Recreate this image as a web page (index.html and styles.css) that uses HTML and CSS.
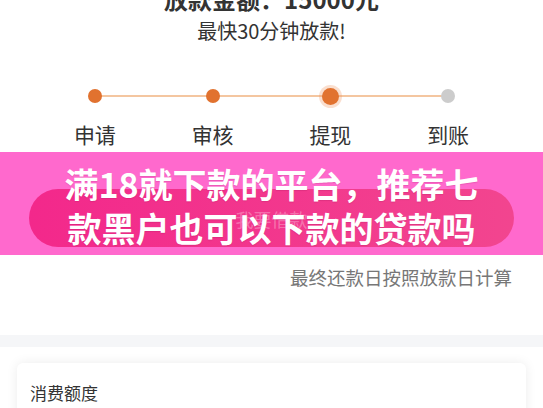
FILE: index.html
```html
<!DOCTYPE html>
<html lang="zh-CN">
<head>
    <meta charset="UTF-8">
    <title>放款进度</title>
    <link rel="stylesheet" href="styles.css">
</head>
<body>
<div class="head">
    <div class="title">放款金额：15000元</div>
    <div class="sub">最快30分钟放款!</div>
</div>
<div class="steps">
    <ul class="track">
        <li><span class="dot"></span></li>
        <li><span class="dot"></span></li>
        <li><span class="dot active"></span></li>
        <li><span class="dot wait"></span></li>
    </ul>
    <ul class="labels">
        <li>申请</li>
        <li>审核</li>
        <li>提现</li>
        <li>到账</li>
    </ul>
</div>
<div class="banner">
    <div class="pill">我要借款</div>
    <div class="banner-title">满18就下款的平台，推荐七<br>款黑户也可以下款的贷款吗</div>
</div>
<p class="note">最终还款日按照放款日计算</p>
<div class="band"></div>
<div class="card">
    <div class="card-title">消费额度</div>
</div>
</body>
</html>
```

FILE: styles.css
```css
*{
    padding: 0;
    margin: 0;
}
ul{
    list-style-type: none;
}
body{
    background-color: #ffffff;
    font-family: "Noto Sans CJK SC", "Noto Sans", sans-serif;
    color: #333333;
    overflow: hidden;
}
.head{
    text-align: center;
}
.title{
    font-size: 24px;
    font-weight: bold;
    line-height: 30px;
    margin-top: -16px;
}
.sub{
    font-size: 20px;
    line-height: 24px;
    margin-top: 5px;
}
.steps{
    padding: 0 36px;
    margin-top: 42px;
}
.track,
.labels{
    display: grid;
    grid-template-columns: repeat(4, 1fr);
    justify-items: center;
    align-items: center;
}
.track{
    height: 22px;
    position: relative;
}
.track::before{
    content: "";
    position: absolute;
    left: 12.5%;
    right: 12.5%;
    top: 10px;
    height: 2px;
    background-color: #f4c6a0;
}
.track li{
    position: relative;
}
.dot{
    display: block;
    width: 14px;
    height: 14px;
    border-radius: 50%;
    background-color: #e1722f;
}
.dot.active{
    width: 17px;
    height: 17px;
    box-shadow: 0 0 0 3px rgba(240, 150, 95, 0.3);
}
.dot.wait{
    background-color: #cccccc;
}
.labels{
    margin-top: 14px;
    font-size: 21px;
    line-height: 26px;
}
.banner{
    position: relative;
    margin-top: 5px;
    height: 103px;
    padding: 37px 29px 0;
    box-sizing: border-box;
    background-color: #ff69cd;
}
.pill{
    height: 58px;
    border-radius: 29px;
    background: linear-gradient(90deg, #f3288b, #f2458f);
    color: rgba(255, 255, 255, 0.3);
    font-size: 18px;
    display: flex;
    align-items: center;
    justify-content: center;
    padding-top: 2px;
    box-sizing: border-box;
}
.banner-title{
    position: absolute;
    left: 0;
    right: 0;
    top: 10px;
    text-align: center;
    color: #ffffff;
    font-size: 34px;
    font-weight: bold;
    line-height: 44px;
    text-shadow: 0 1px 1px rgba(120, 0, 60, 0.15);
}
.note{
    margin-top: 10px;
    padding-right: 31px;
    text-align: right;
    font-size: 18.5px;
    line-height: 24px;
    color: #777777;
}
.band{
    margin-top: 46px;
    height: 12px;
    background-color: #f5f6f8;
}
.card{
    margin: 16px 17px 0;
    padding: 18px 13px 20px;
    border-radius: 6px;
    background-color: #ffffff;
    box-shadow: 0 0 12px rgba(0, 0, 0, 0.08);
}
.card-title{
    font-size: 17px;
    line-height: 24px;
}
```
